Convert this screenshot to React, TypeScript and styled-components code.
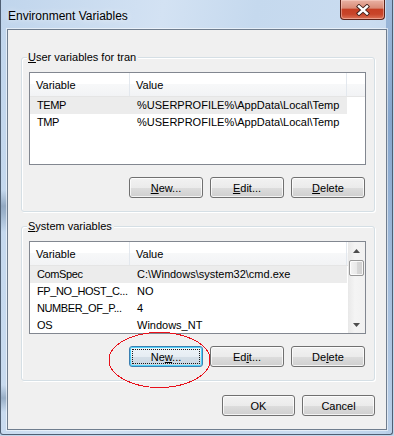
import React from "react";
import styled, { createGlobalStyle, css } from "styled-components";

const Global = createGlobalStyle`
  html, body { margin: 0; padding: 0; background: #c3d7ed; }
  body { font-family: "Liberation Sans", Arial, sans-serif; font-size: 11px; color: #000; }
  #root { width: 394px; height: 436px; overflow: hidden; }
`;

const Window = styled.div`
  position: relative;
  box-sizing: border-box;
  width: 393px;
  height: 435px;
  border: 1px solid #4f5f73;
  border-top: none;
  border-radius: 0 0 3px 3px;
  padding: 0 5px 4px 6px;
  display: flex;
  flex-direction: column;
  background:
    linear-gradient(to bottom, transparent 190px, #93a9c2 206px, #9fb5cd 214px, transparent 232px, transparent 385px, #98aec6 398px, transparent 412px) left top / 7px 100% no-repeat,
    linear-gradient(to bottom, #9db9da, #86a6cd 120px, #a7c0de 300px, #b9cfe8) right top / 6px 100% no-repeat,
    linear-gradient(100deg, #c0d5ec 0%, #d3e2f3 35%, #c5d9ee 55%, #cadcf0 80%, #bcd2ea 100%);
`;

const TitleBar = styled.div`
  height: 29px;
  display: flex;
  align-items: flex-start;
`;

const Title = styled.div`
  font-size: 12px;
  line-height: 14px;
  margin: 9px 0 0 1px;
  color: #000;
  text-shadow: 0 0 6px rgba(255, 255, 255, 0.9);
`;

const CloseButton = styled.div`
  margin-left: auto;
  margin-right: 2px;
  box-sizing: border-box;
  width: 45px;
  height: 20px;
  border: 1px solid #5b2219;
  border-top: none;
  border-radius: 0 0 4px 4px;
  background: linear-gradient(
    to bottom,
    #e9b2a4 0%,
    #d98b77 42%,
    #c63f24 50%,
    #c8452a 75%,
    #dc7358 100%
  );
  box-shadow: inset 0 0 0 1px rgba(255, 220, 210, 0.45);
  display: flex;
  align-items: center;
  justify-content: center;
`;

const Client = styled.div`
  box-sizing: border-box;
  width: 380px;
  height: 401px;
  border: 1px solid #6f7d8e;
  box-shadow: 0 0 0 1px rgba(255, 255, 255, 0.55);
  background: #f0f0f0;
  padding: 0 11px 0 13px;
  display: flex;
  flex-direction: column;
`;

const GroupBox = styled.div<{ $first?: boolean }>`
  box-sizing: border-box;
  height: 155px;
  margin-top: ${(p) => (p.$first ? "27px" : "14px")};
  border: 1px solid #d5dfe5;
  border-radius: 3px;
  box-shadow: inset 1px 1px 0 #fff, 1px 1px 0 #fff;
  padding: 0 8px 13px 7px;
  display: flex;
  flex-direction: column;
`;

const GroupLabel = styled.div`
  align-self: flex-start;
  margin: -8px 0 0 -2px;
  padding: 0 2px 0 1px;
  height: 14px;
  line-height: 14px;
  background: #f0f0f0;
`;

const ListView = styled.div`
  box-sizing: border-box;
  margin-top: 8px;
  height: 93px;
  border: 1px solid #828790;
  background: #fff;
  display: flex;
  overflow: hidden;
`;

const ListBody = styled.div`
  flex: 1;
  display: flex;
  flex-direction: column;
  overflow: hidden;
`;

const Header = styled.div`
  flex: none;
  box-sizing: border-box;
  height: 24px;
  display: flex;
  border-bottom: 1px solid #e5e5e5;
  background: linear-gradient(to bottom, #ffffff 0%, #ffffff 50%, #f7f8f9 50%, #f2f3f5 100%);
`;

const HeaderCell = styled.div<{ $w: number }>`
  box-sizing: border-box;
  width: ${(p) => p.$w}px;
  flex: none;
  padding-left: 6px;
  border-right: 1px solid #e3e8ee;
  display: flex;
  align-items: center;
  color: #000;
`;

const Row = styled.div<{ $selected?: boolean }>`
  flex: none;
  display: flex;
  width: 317px;
  height: 17px;
  line-height: 17px;
  background: ${(p) => (p.$selected ? "#ececec" : "transparent")};
`;

const Cell = styled.div<{ $w: number; $name?: boolean }>`
  box-sizing: border-box;
  width: ${(p) => p.$w}px;
  flex: none;
  padding-left: 7px;
  white-space: nowrap;
  overflow: hidden;
  letter-spacing: ${(p) => (p.$name ? "-0.4px" : "0")};
`;

const ScrollBar = styled.div`
  width: 17px;
  flex: none;
  display: flex;
  flex-direction: column;
  background: linear-gradient(to right, #e8e8e8, #f4f4f4 40%, #f1f1f1);
`;

const ScrollArrow = styled.div`
  height: 17px;
  flex: none;
  display: flex;
  align-items: center;
  justify-content: center;
`;

const ScrollTrack = styled.div`
  flex: 1;
  padding-top: 1px;
`;

const ScrollThumb = styled.div`
  box-sizing: border-box;
  margin: 0 1px;
  height: 16px;
  border: 1px solid #979797;
  border-radius: 2px;
  background: linear-gradient(to right, #f4f4f4, #e9e9e9 50%, #d8d8d8 51%, #d0d0d0);
  box-shadow: inset 0 0 0 1px rgba(255, 255, 255, 0.8);
`;

const ButtonRow = styled.div<{ $bottom?: boolean }>`
  display: flex;
  justify-content: flex-end;
  gap: 7px;
  margin-top: ${(p) => (p.$bottom ? "14px" : "12px")};
  margin-right: ${(p) => (p.$bottom ? "0" : "1px")};
`;

const Button = styled.div<{ $focused?: boolean; $w?: number }>`
  position: relative;
  box-sizing: border-box;
  width: ${(p) => p.$w ?? 74}px;
  height: 21px;
  border: 1px solid #707070;
  border-radius: 3px;
  background: linear-gradient(to bottom, #f2f2f2 0%, #ebebeb 50%, #dddddd 50%, #cfcfcf 100%);
  box-shadow: inset 0 0 0 1px rgba(255, 255, 255, 0.75);
  display: flex;
  align-items: center;
  justify-content: center;
  line-height: 14px;
  font-size: 11px;
  color: #000;
  ${(p) =>
    p.$focused &&
    css`
      border-color: #3c7fb1;
      background: linear-gradient(to bottom, #eef4f9 0%, #e6edf3 50%, #d5dfe8 50%, #cbd7e2 100%);
      box-shadow: inset 0 0 0 1px #4fd2fa;
      &::after {
        content: "";
        position: absolute;
        inset: 2px;
        border: 1px dotted #1a1a1a;
      }
    `}
  u {
    text-decoration: underline;
    text-underline-offset: 1px;
  }
`;

const Annotation = styled.svg`
  position: absolute;
  left: 107px;
  top: 332px;
  pointer-events: none;
`;

const ArrowUp = () => (
  <svg width="7" height="4" viewBox="0 0 7 4">
    <path d="M3.5 0 L7 4 L0 4 Z" fill="#4d4d4d" />
  </svg>
);
const ArrowDown = () => (
  <svg width="7" height="4" viewBox="0 0 7 4">
    <path d="M0 0 L7 0 L3.5 4 Z" fill="#4d4d4d" />
  </svg>
);

type Var = { name: string; value: string; selected?: boolean };

const userVars: Var[] = [
  { name: "TEMP", value: "%USERPROFILE%\\AppData\\Local\\Temp", selected: true },
  { name: "TMP", value: "%USERPROFILE%\\AppData\\Local\\Temp" },
];

const sysVars: Var[] = [
  { name: "ComSpec", value: "C:\\Windows\\system32\\cmd.exe", selected: true },
  { name: "FP_NO_HOST_C...", value: "NO" },
  { name: "NUMBER_OF_P...", value: "4" },
  { name: "OS", value: "Windows_NT" },
];

const VarList = ({ vars, scroll }: { vars: Var[]; scroll?: boolean }) => (
  <ListView>
    <ListBody>
      <Header>
        <HeaderCell $w={100}>Variable</HeaderCell>
        <HeaderCell $w={217}>Value</HeaderCell>
      </Header>
      {vars.map((v) => (
        <Row key={v.name} $selected={v.selected}>
          <Cell $w={100} $name>{v.name}</Cell>
          <Cell $w={217}>{v.value}</Cell>
        </Row>
      ))}
    </ListBody>
    {scroll && (
      <ScrollBar>
        <ScrollArrow>
          <ArrowUp />
        </ScrollArrow>
        <ScrollTrack>
          <ScrollThumb />
        </ScrollTrack>
        <ScrollArrow>
          <ArrowDown />
        </ScrollArrow>
      </ScrollBar>
    )}
  </ListView>
);

export default function App() {
  return (
    <>
      <Global />
      <Window>
        <TitleBar>
          <Title>Environment Variables</Title>
          <CloseButton>
            <svg width="14" height="12" viewBox="0 0 14 12">
              <path d="M3 2.5 L11 9.5 M11 2.5 L3 9.5" stroke="#3d1f1a" strokeWidth="4.2" strokeLinecap="square" />
              <path d="M3 2.5 L11 9.5 M11 2.5 L3 9.5" stroke="#ffffff" strokeWidth="2.4" strokeLinecap="square" />
            </svg>
          </CloseButton>
        </TitleBar>
        <Client>
          <GroupBox $first>
            <GroupLabel>
              <u>U</u>ser variables for tran
            </GroupLabel>
            <VarList vars={userVars} />
            <ButtonRow>
              <Button>
                <span><u>N</u>ew...</span>
              </Button>
              <Button>
                <span><u>E</u>dit...</span>
              </Button>
              <Button>
                <span><u>D</u>elete</span>
              </Button>
            </ButtonRow>
          </GroupBox>
          <GroupBox>
            <GroupLabel>
              <u>S</u>ystem variables
            </GroupLabel>
            <VarList vars={sysVars} scroll />
            <ButtonRow>
              <Button $focused>
                <span>Ne<u>w</u>...</span>
              </Button>
              <Button>
                <span>Ed<u>i</u>t...</span>
              </Button>
              <Button>
                <span>De<u>l</u>ete</span>
              </Button>
            </ButtonRow>
          </GroupBox>
          <ButtonRow $bottom>
            <Button $w={73}>OK</Button>
            <Button $w={73}>Cancel</Button>
          </ButtonRow>
        </Client>
        <Annotation width="104" height="58" viewBox="0 0 104 58">
          <ellipse
            cx="51.5"
            cy="28"
            rx="50.5"
            ry="27.5"
            fill="none"
            stroke="#e8101a"
            strokeWidth="1"
            shapeRendering="crispEdges"
          />
        </Annotation>
      </Window>
    </>
  );
}
